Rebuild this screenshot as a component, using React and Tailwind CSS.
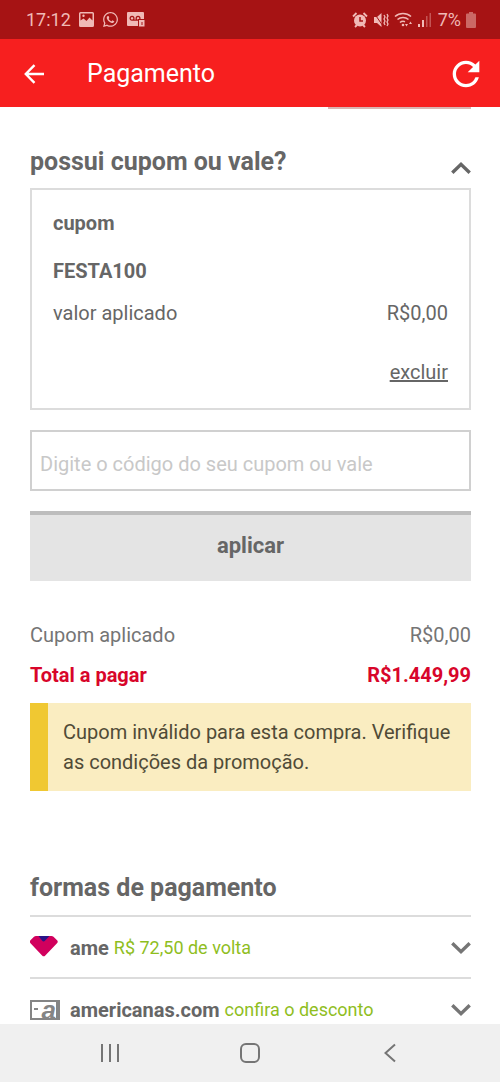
import React, { useState } from 'react';
import { FaWhatsapp } from 'react-icons/fa';
import { MdRefresh } from 'react-icons/md';

const methods = [
  { id: 'ame', name: 'ame', note: 'R$ 72,50 de volta', icon: <AmeIcon /> },
  { id: 'acom', name: 'americanas.com', note: 'confira o desconto', icon: <CardIcon /> },
];

function AmeIcon() {
  return (
    <svg width="28" height="24" viewBox="0 0 28 24">
      <path d="M6 0h15.500a3 3 0 0 1 2 .8L26.800 4a2.200 2.200 0 0 1 .2 3.200L15.300 19.500a2.200 2.200 0 0 1-3.200 0L.5 7.200A2.200 2.200 0 0 1 .7 4L4 .8A3 3 0 0 1 6 0Z" fill="#d1005d" />
      <path d="M8.500 0h11l-4.300 4.600a2.200 2.200 0 0 1-3.200 0Z" fill="#2a1488" />
    </svg>
  );
}

function CardIcon() {
  return (
    <span className="flex h-5 w-[30px] items-start justify-between border-2 border-r-4 border-[#858585] bg-white">
      <span className="mt-[6px] ml-[2px] h-[2px] w-1 bg-[#858585]" />
      <span className="-mt-1 font-['Liberation_Sans',sans-serif] text-[26px] leading-6 font-bold text-[#858585] italic">a</span>
    </span>
  );
}

function Chevron({ up }) {
  return (
    <svg width="20" height="14" viewBox="0 0 20 14" fill="none" stroke={up ? '#666666' : '#757575'} strokeWidth="3.4">
      <path d={up ? 'M1.3 11.8 10 3.4l8.7 8.4' : 'M1.3 2.2 10 10.6l8.7-8.4'} />
    </svg>
  );
}

function StatusBar() {
  return (
    <div className="flex h-[39px] shrink-0 items-center justify-between bg-[#a61314] pr-6 pl-[26px] text-[#f0b9b6]">
      <div className="flex items-center gap-2">
        <span className="text-lg leading-6">17:12</span>
        <svg width="15" height="15" viewBox="0 0 15 15">
          <path fillRule="evenodd" fill="currentColor" d="M1.5 0h12A1.5 1.5 0 0 1 15 1.5v12a1.5 1.5 0 0 1-1.5 1.5h-12A1.5 1.5 0 0 1 0 13.500v-12A1.500 1.500 0 0 1 1.500 0ZM1.500 1.500v7L4.500 6.500l3 2.500 3-3.500 3 3v-7ZM4.500 2.500a1.200 1.200 0 1 1 0 2.400 1.200 1.200 0 0 1 0-2.400Z" />
        </svg>
        <FaWhatsapp size={17} />
        <svg width="18" height="15" viewBox="0 0 18 15">
          <path fill="currentColor" d="M1 0h15a1 1 0 0 1 1 1v6h-6v7H1a1 1 0 0 1-1-1V1a1 1 0 0 1 1-1Z" />
          <path fill="none" stroke="#a61314" strokeWidth="1.300" d="M5 8.200h6M5 8.200a1.900 1.900 0 1 1 .1 0ZM11 8.200a1.900 1.900 0 1 1 .1 0Z" />
          <rect x="12" y="8" width="5.500" height="6.500" fill="currentColor" />
          <path d="M15 10v3" stroke="#a61314" />
        </svg>
      </div>
      <div className="flex items-center gap-[5px]">
        <svg width="16" height="16" viewBox="0 0 16 16">
          <circle cx="8" cy="8.500" r="6" fill="currentColor" />
          <path d="M1 4.500 4.500 1M15 4.500 11.500 1M3 15l2-2M13 15l-2-2" stroke="currentColor" strokeWidth="1.800" />
          <path d="M8 5v4h3" fill="none" stroke="#a61314" strokeWidth="1.500" />
        </svg>
        <svg width="16" height="16" viewBox="0 0 16 16" fill="none" stroke="currentColor">
          <path d="M1 5h3l4.500-4v14L4 11H1Z" fill="currentColor" stroke="none" />
          <path d="M1 1l9 13" stroke="#a61314" />
          <path d="m11 3 1 2-1 2 1 2-1 2 1 2M14 2l1 2-1 2 1 2-1 2 1 2-1 2" strokeWidth="1.300" />
        </svg>
        <svg width="19" height="15" viewBox="0 0 19 15" fill="none" stroke="currentColor" strokeWidth="1.600">
          <path d="M1 4.500a12 12 0 0 1 16 0M3.500 7.500a8.500 8.500 0 0 1 11 0M6 10.500a5 5 0 0 1 5-.8" />
          <circle cx="9" cy="13" r="1.300" fill="currentColor" stroke="none" />
          <path d="M11 12l1.500 2.500L14 12ZM15 12l1.500-2.500L18 12Z" fill="currentColor" stroke="none" />
        </svg>
        <svg className="mr-[2px]" width="13" height="14" viewBox="0 0 13 14" fill="currentColor">
          <path d="M0 11h2v3H0ZM4 7h2v7H4Z" />
          <path d="M8 3h1.500v11H8ZM11.500 0H13v14h-1.500Z" opacity="0.400" />
        </svg>
        <span className="text-lg leading-6">7%</span>
        <svg width="10" height="16" viewBox="0 0 10 16">
          <path d="M3 0h4v1.500h2a1 1 0 0 1 1 1V15a1 1 0 0 1-1 1H1a1 1 0 0 1-1-1V2.500a1 1 0 0 1 1-1h2Z" fill="#cb6865" />
        </svg>
      </div>
    </div>
  );
}

function AppBar() {
  return (
    <header className="flex h-[68px] shrink-0 items-center bg-[#f71f1f] pt-[2px] pr-[14px] pl-6 text-white">
      <button type="button" aria-label="Voltar">
        <svg width="21" height="20" viewBox="0 0 21 20" fill="none" stroke="currentColor" strokeWidth="2.400">
          <path d="M10.500 1.200 1.800 10l8.700 8.800M2 10h18" />
        </svg>
      </button>
      <h1 className="ml-[42px] flex-1 text-[25px] leading-8">Pagamento</h1>
      <button type="button" aria-label="Atualizar"><MdRefresh size={40} /></button>
    </header>
  );
}

function NavBar() {
  return (
    <nav className="flex h-[58px] shrink-0 items-center justify-center gap-[120px] bg-[#f0f0f0] text-[#757575]">
      <button type="button" aria-label="Recentes">
        <svg width="20" height="20" viewBox="0 0 20 20" stroke="currentColor" strokeWidth="2"><path d="M2 1v18M10 1v18M18 1v18" /></svg>
      </button>
      <button type="button" aria-label="Início">
        <svg width="20" height="20" viewBox="0 0 20 20" fill="none" stroke="currentColor" strokeWidth="2"><rect x="1" y="1" width="18" height="18" rx="5" /></svg>
      </button>
      <button type="button" aria-label="Voltar">
        <svg width="20" height="20" viewBox="0 0 20 20" fill="none" stroke="currentColor" strokeWidth="2"><path d="M15 1.500 5.500 10l9.500 8.500" /></svg>
      </button>
    </nav>
  );
}

export default function App() {
  const [code, setCode] = useState('');

  return (
    <div className="flex h-screen flex-col overflow-hidden bg-white font-[Roboto,sans-serif] text-xl leading-6 text-[#666666]">
      <StatusBar />
      <AppBar />
      <main className="min-h-0 flex-1 overflow-hidden pr-[29px] pl-[30px]">
        <div className="ml-auto h-[2px] w-[143px] bg-[#d9b5b3]" />

        <section className="pt-[37px]">
          <div className="flex items-center justify-between">
            <h2 className="text-[25px] leading-8 font-bold">possui cupom ou vale?</h2>
            <button type="button" aria-label="Recolher" className="pt-3"><Chevron up /></button>
          </div>

          <div className="mt-[10px] border-2 border-[#dcdcdc] px-[21px] pt-[21px] pb-6">
            <h3 className="font-bold">cupom</h3>
            <p className="mt-6 font-bold">FESTA100</p>
            <div className="mt-[18px] flex justify-between">
              <span>valor aplicado</span>
              <span>R$0,00</span>
            </div>
            <div className="mt-[35px] flex justify-end">
              <button type="button" className="underline">excluir</button>
            </div>
          </div>

          <form onSubmit={e => e.preventDefault()}>
            <input
              aria-label="Código do cupom ou vale"
              placeholder="Digite o código do seu cupom ou vale"
              value={code}
              onChange={e => setCode(e.target.value)}
              className="mt-5 block h-[61px] w-full border-2 border-[#d0d0d0] px-2 pt-[6px] placeholder:text-[#c8c8c8]"
            />
            <button type="submit" className="mt-5 block h-[70px] w-full border-t-4 border-[#bdbdbd] bg-[#e4e4e4] pb-1 text-[22px] font-bold">aplicar</button>
          </form>
        </section>

        <section className="pt-[42px]">
          <div className="flex justify-between text-[#757575]">
            <span>Cupom aplicado</span>
            <span>R$0,00</span>
          </div>
          <div className="mt-4 flex justify-between font-bold text-[#d8052a]">
            <span>Total a pagar</span>
            <span>R$1.449,99</span>
          </div>
          <p role="alert" className="mt-4 border-l-[18px] border-[#f0c832] bg-[#faedc1] py-[14px] pr-4 pl-[15px] leading-[30px] text-[#504b37]">
            Cupom inválido para esta compra. Verifique as condições da promoção.
          </p>
        </section>

        <section className="pt-[81px]">
          <h2 className="text-[25px] leading-8 font-bold">formas de pagamento</h2>
          <ul className="mt-[11px]">
            {methods.map(m => (
              <li key={m.id} className="border-t-2 border-[#dcdcdc]">
                <button type="button" className="flex h-[60px] w-full items-center pt-[2px]">
                  <span className="flex w-10">{m.icon}</span>
                  <span className="font-bold">{m.name}</span>
                  <span className="ml-[5px] text-lg text-[#8fbe1e]">{m.note}</span>
                  <span className="ml-auto"><Chevron /></span>
                </button>
              </li>
            ))}
          </ul>
        </section>
      </main>
      <NavBar />
    </div>
  );
}
